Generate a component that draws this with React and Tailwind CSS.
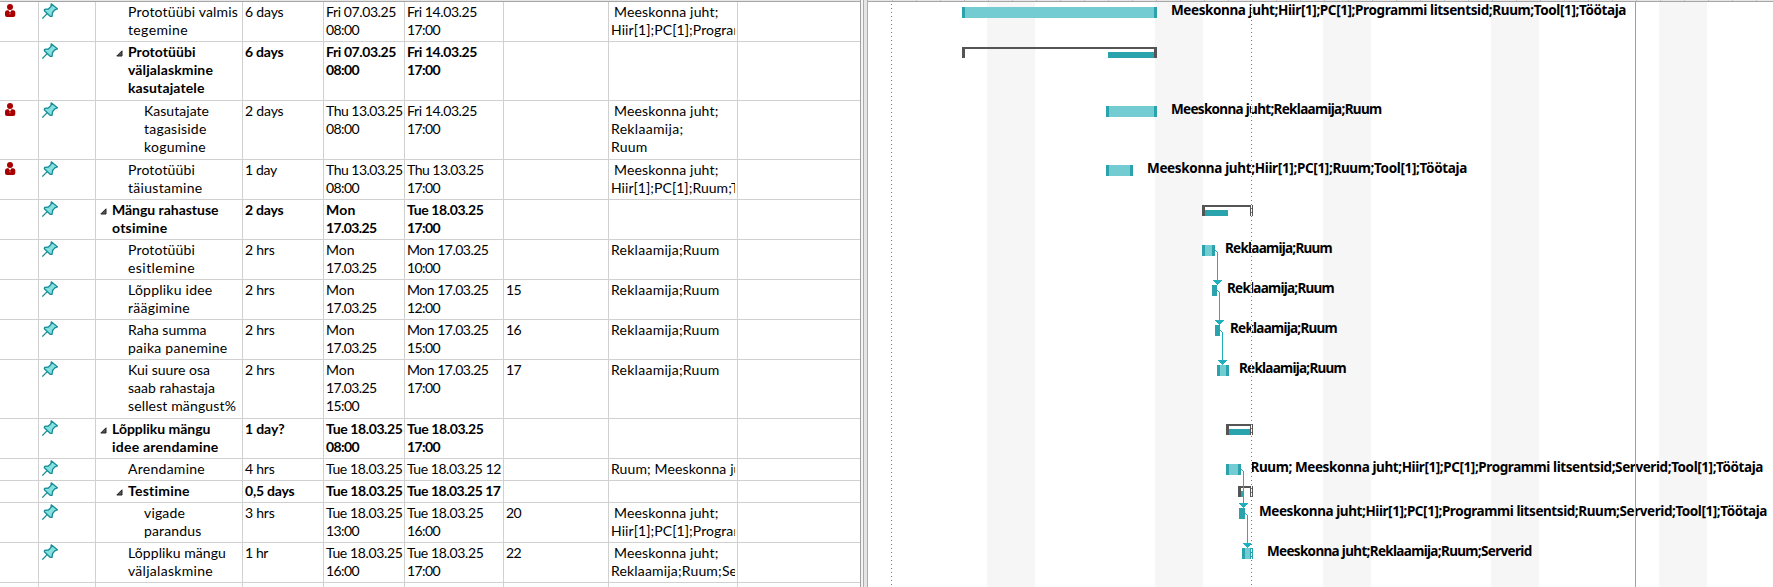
import { useLayoutEffect, useRef, useState } from "react";

// Rendered width in pixels of each regular-weight line.
const REGULAR = {
  "Prototüübi valmis": 110, tegemine: 60, Kasutajate: 65, tagasiside: 62.5, kogumine: 62,
  Prototüübi: 67, täiustamine: 74.5, esitlemine: 67, "Lõppliku idee": 84.5, räägimine: 62,
  "Raha summa": 78.5, "paika panemine": 99.5, "Kui suure osa": 82, "saab rahastaja": 87,
  "sellest mängust%": 108, Arendamine: 77, vigade: 41, parandus: 57.5, "Lõppliku mängu": 98,
  väljalaskmine: 85, "6 days": 38.5, "2 days": 38.5, "1 day": 32, "2 hrs": 29.5, "4 hrs": 29.5,
  "3 hrs": 29.5, "1 hr": 23, "Fri 07.03.25": 70, "Fri 14.03.25": 70, "Thu 13.03.25": 76.5,
  "Mon 17.03.25": 81.5, "Tue 18.03.25": 76.5, "Tue 18.03.25 12": 94, Mon: 28.5, "17.03.25": 50.5,
  "08:00": 33, "10:00": 33, "12:00": 33, "13:00": 33, "15:00": 33, "16:00": 33, "17:00": 33,
  "15": 15, "16": 15, "17": 15, "20": 15, "22": 15,
  "Meeskonna juht;": 104.5, "Hiir[1];PC[1];Programmi": 149, "Reklaamija;": 72.5, Ruum: 36.5,
  "Hiir[1];PC[1];Ruum;Tool": 146, "Reklaamija;Ruum": 108.5, "Ruum; Meeskonna juht": 143.5,
  "Reklaamija;Ruum;Serverid": 163,
};

// Rendered width in pixels of each bold line.
const BOLD = {
  Prototüübi: 67.5, väljalaskmine: 85, kasutajatele: 76.5, "Mängu rahastuse": 106.5, otsimine: 55.5,
  "Lõppliku mängu": 98.5, "idee arendamine": 106.5, Testimine: 62, "6 days": 38.5, "2 days": 38.5,
  "1 day?": 39.5, "0,5 days": 49.5, "Fri 07.03.25": 70, "Fri 14.03.25": 70, Mon: 29.5,
  "17.03.25": 50.5, "Tue 18.03.25": 76.5, "Tue 18.03.25 17": 93.5, "08:00": 33, "17:00": 33,
};

function Fit({ children, width }) {
  const ref = useRef(null);
  const [spacing, setSpacing] = useState(0);
  useLayoutEffect(() => {
    if (!width) return;
    const natural = ref.current.getBoundingClientRect().width;
    setSpacing((width - natural) / children.length);
  }, [children, width]);
  return (
    <span ref={ref} className="inline-block whitespace-pre" style={{ letterSpacing: spacing + "px" }}>
      {children}
    </span>
  );
}

function Lines({ lines = [], bold }) {
  return lines.map((raw, i) => {
    const text = raw.trimStart();
    return (
      <div key={i} className={raw === text ? "h-[18px]" : "h-[18px] pl-[3px]"}>
        <Fit width={(bold ? BOLD : REGULAR)[text]}>{text}</Fit>
      </div>
    );
  });
}

function Person() {
  return (
    <svg className="mt-0.5 ml-[5px]" width="11" height="14" viewBox="0 0 11 14" fill="#a80000">
      <circle cx="5" cy="3" r="3" />
      <path d="M0 8.5Q0 6.5 2 6.3L3.5 6.3 5 8.6 6.5 6.3 8.3 6.3Q10.3 6.5 10.3 8.5V11Q10.3 13 8.3 13H2Q0 13 0 11Z" />
      <path d="M5 8.2L5.7 10 5 10.6 4.3 10Z" fill="#d98080" />
    </svg>
  );
}

function Pin() {
  return (
    <svg className="mt-px ml-[3px]" width="16" height="16" viewBox="0 0 16 16" fill="none" stroke="#188c96" strokeWidth="1.3" strokeLinejoin="round">
      <path d="M5.4 10.4L0.3 15.6" />
      <path d="M9.2 0.8L15.4 5.8 12.8 6.9 10.6 9.5 10 13.4 8.4 13.4 2.3 7.8 2.6 6.4 6.4 6 9 3.6Z" fill="#85e0e0" />
    </svg>
  );
}

function Caret() {
  return (
    <svg className="mt-2 mr-[6px] shrink-0" width="7" height="7" viewBox="0 0 7 7">
      <path d="M6 0.8V6H0.8Z" fill="#555" stroke="#222" strokeWidth="1" />
    </svg>
  );
}

const MON = ["Mon", "17.03.25"];
const ROWS = [
  { h: 40, person: 1, level: 2, name: ["Prototüübi valmis", "tegemine"], dur: "6 days", start: ["Fri 07.03.25", "08:00"], end: ["Fri 14.03.25", "17:00"], res: [" Meeskonna juht;", "Hiir[1];PC[1];Programmi"] },
  { h: 59, bold: 1, level: 2, name: ["Prototüübi", "väljalaskmine", "kasutajatele"], dur: "6 days", start: ["Fri 07.03.25", "08:00"], end: ["Fri 14.03.25", "17:00"] },
  { h: 59, person: 1, level: 3, name: ["Kasutajate", "tagasiside", "kogumine"], dur: "2 days", start: ["Thu 13.03.25", "08:00"], end: ["Fri 14.03.25", "17:00"], res: [" Meeskonna juht;", "Reklaamija;", "Ruum"] },
  { h: 40, person: 1, level: 2, name: ["Prototüübi", "täiustamine"], dur: "1 day", start: ["Thu 13.03.25", "08:00"], end: ["Thu 13.03.25", "17:00"], res: [" Meeskonna juht;", "Hiir[1];PC[1];Ruum;Tool"] },
  { h: 40, bold: 1, level: 1, name: ["Mängu rahastuse", "otsimine"], dur: "2 days", start: MON, end: ["Tue 18.03.25", "17:00"] },
  { h: 40, level: 2, name: ["Prototüübi", "esitlemine"], dur: "2 hrs", start: MON, end: ["Mon 17.03.25", "10:00"], res: ["Reklaamija;Ruum"] },
  { h: 40, level: 2, name: ["Lõppliku idee", "räägimine"], dur: "2 hrs", start: MON, end: ["Mon 17.03.25", "12:00"], pred: "15", res: ["Reklaamija;Ruum"] },
  { h: 40, level: 2, name: ["Raha summa", "paika panemine"], dur: "2 hrs", start: MON, end: ["Mon 17.03.25", "15:00"], pred: "16", res: ["Reklaamija;Ruum"] },
  { h: 59, level: 2, name: ["Kui suure osa", "saab rahastaja", "sellest mängust%"], dur: "2 hrs", start: [...MON, "15:00"], end: ["Mon 17.03.25", "17:00"], pred: "17", res: ["Reklaamija;Ruum"] },
  { h: 40, bold: 1, level: 1, name: ["Lõppliku mängu", "idee arendamine"], dur: "1 day?", start: ["Tue 18.03.25", "08:00"], end: ["Tue 18.03.25", "17:00"] },
  { h: 22, level: 2, name: ["Arendamine"], dur: "4 hrs", start: ["Tue 18.03.25"], end: ["Tue 18.03.25 12"], res: ["Ruum; Meeskonna juht"] },
  { h: 22, bold: 1, level: 2, name: ["Testimine"], dur: "0,5 days", start: ["Tue 18.03.25"], end: ["Tue 18.03.25 17"] },
  { h: 40, level: 3, name: ["vigade", "parandus"], dur: "3 hrs", start: ["Tue 18.03.25", "13:00"], end: ["Tue 18.03.25", "16:00"], pred: "20", res: [" Meeskonna juht;", "Hiir[1];PC[1];Programmi"] },
  { h: 40, level: 2, name: ["Lõppliku mängu", "väljalaskmine"], dur: "1 hr", start: ["Tue 18.03.25", "16:00"], end: ["Tue 18.03.25", "17:00"], pred: "22", res: [" Meeskonna juht;", "Reklaamija;Ruum;Serverid"] },
  { h: 5, level: 1 },
];

const INDENT = { 1: "pl-4", 2: "pl-8", 3: "pl-12" };
const CELL = "shrink-0 overflow-hidden border-r border-[#d0d0d0]";
const TEXT = CELL + " pl-[2px]";

function Row({ row }) {
  const { bold } = row;
  return (
    <div
      className={"flex shrink-0 border-b border-[#d0d0d0] text-[14px] leading-[18px] " + (bold ? "font-bold" : "")}
      style={{ height: row.h }}
    >
      <div className={CELL + " w-[39px]"}>{row.person && <Person />}</div>
      <div className={CELL + " w-[57px]"}>{row.name && <Pin />}</div>
      <div className={CELL + " flex w-[147px] " + INDENT[row.level]}>
        {bold ? (
          <div className="-ml-[13px] pl-px"><Caret /></div>
        ) : null}
        <div className={bold ? "-ml-px pt-px" : "pt-px"}>
          <Lines lines={row.name} bold={bold} />
        </div>
      </div>
      <div className={TEXT + " w-[81px] pt-px"}><Lines lines={row.dur && [row.dur]} bold={bold} /></div>
      <div className={TEXT + " w-[81px] pt-px"}><Lines lines={row.start} bold={bold} /></div>
      <div className={TEXT + " w-[99px] pt-px"}><Lines lines={row.end} bold={bold} /></div>
      <div className={TEXT + " w-[105px] pt-px"}><Lines lines={row.pred && [row.pred]} bold={bold} /></div>
      <div className={CELL + " w-[129px] px-[2px] pt-px"}>
        <div className="overflow-hidden"><Lines lines={row.res} bold={bold} /></div>
      </div>
      <div className="flex-1" />
    </div>
  );
}

// Chart coordinates: x from the left edge of the chart, y from the first row's top.
const TASKS = [
  [94, 5, 195], [238, 104, 51], [238, 163, 27], [334, 243, 13], [344, 283, 5], [347, 323, 5],
  [349, 363, 12], [358, 462, 15], [371, 506, 6], [374, 546, 11],
];
const SUMMARIES = [
  [94, 45, 195, 240, 46], [334, 203, 51, 337, 23], [358, 422, 27, 361, 21], [370, 484, 15, 373, 3],
];
const LINKS = [
  [347, 248, 349, 278], [349, 288, 351, 318], [352, 328, 354, 358], [373, 467, 375, 501], [377, 511, 379, 541],
];
const LABELS = [
  [303, 0, 455, "Meeskonna juht;Hiir[1];PC[1];Programmi litsentsid;Ruum;Tool[1];Töötaja"],
  [303, 99, 210.5, "Meeskonna juht;Reklaamija;Ruum"],
  [279, 158, 320, "Meeskonna juht;Hiir[1];PC[1];Ruum;Tool[1];Töötaja"],
  [357, 238, 107, "Reklaamija;Ruum"],
  [359, 278, 107, "Reklaamija;Ruum"],
  [362, 318, 107, "Reklaamija;Ruum"],
  [371, 358, 107, "Reklaamija;Ruum"],
  [382.5, 457, 512.5, "Ruum; Meeskonna juht;Hiir[1];PC[1];Programmi litsentsid;Serverid;Tool[1];Töötaja"],
  [391, 501, 508, "Meeskonna juht;Hiir[1];PC[1];Programmi litsentsid;Ruum;Serverid;Tool[1];Töötaja"],
  [399, 541, 264.5, "Meeskonna juht;Reklaamija;Ruum;Serverid"],
];

function Chart() {
  return (
    <div className="relative flex-1 overflow-hidden">
      <svg className="absolute inset-0" width="905" height="585" shapeRendering="crispEdges">
        {[119, 287, 455, 623, 791].map((x) => (
          <rect key={x} x={x} y="0" width="48" height="585" fill="#f6f6f6" />
        ))}
        {SUMMARIES.map(([x, y, w, px, pw]) => (
          <g key={y}>
            <path d={`M${x} ${y}h${w}v11h-3v-9h${6 - w}v9h-3z`} fill="#555" />
            <rect x={px} y={y + 5} width={pw} height="6" fill="#2aa3ad" />
          </g>
        ))}
        {TASKS.map(([x, y, w]) => (
          <g key={y}>
            <rect x={x} y={y} width={w} height="11" fill="#2aa3ad" />
            {w > 6 && <rect x={x + 3} y={y} width={w - 6} height="11" fill="#74ccd3" />}
          </g>
        ))}
        {LINKS.map(([x, y, x2, y2]) => (
          <g key={y}>
            <path d={`M${x} ${y}h1v1h1v1h1V${y2 + 1}h-1V${y + 2}h-1v-1h-1z`} fill="#1fb0bc" />
            <path d={`M${x2 - 4} ${y2}h9v1h-1v1h-1v1h-1v1h-1v1h-1v-1h-1v-1h-1v-1h-1v-1h-1z`} fill="#1fb0bc" />
          </g>
        ))}
      </svg>
      {LABELS.map(([x, y, w, text]) => (
        <div
          key={y}
          className="absolute font-['Noto_Sans','Open_Sans',sans-serif] text-[13.5px] leading-[18px] font-bold"
          style={{ left: x, top: y - 1 }}
        >
          <Fit width={w}>{text}</Fit>
        </div>
      ))}
      <svg className="absolute inset-0" width="905" height="585" shapeRendering="crispEdges">
        <path d="M383.5 0V585" stroke="#fff" />
        <path d="M23.5 2V585M383.5 2V585" stroke="#777" strokeDasharray="1 3" />
        <path d="M767.5 0V585" stroke="#84b584" />
      </svg>
    </div>
  );
}

export default function App() {
  return (
    <div className="flex h-[587px] w-[1773px] overflow-hidden bg-white font-['Lato',sans-serif] text-black">
      <div className="flex w-[861px] shrink-0 flex-col border-r border-[#a0a0a0]">
        <div className="flex h-0.5 shrink-0 border-b border-[#a6a6a6] bg-[#e6e6e6]" />
        {ROWS.map((row, i) => <Row key={i} row={row} />)}
      </div>
      <div className="flex w-[7px] shrink-0 bg-[#e6e6e6]">
        <div className="w-0.5 bg-[#f4f4f4]" />
        <div className="w-px bg-[#ababab]" />
        <div className="w-[3px]" />
        <div className="w-px bg-[#ababab]" />
      </div>
      <div className="flex flex-1 flex-col overflow-hidden">
        <div className="flex h-0.5 shrink-0 border-b border-[#a6a6a6] bg-[#e6e6e6] pl-6">
          {Array.from({ length: 37 }, (_, i) => (
            <div key={i} className="w-6 shrink-0 border-l border-[#c4c4c4]" />
          ))}
        </div>
        <Chart />
      </div>
    </div>
  );
}
